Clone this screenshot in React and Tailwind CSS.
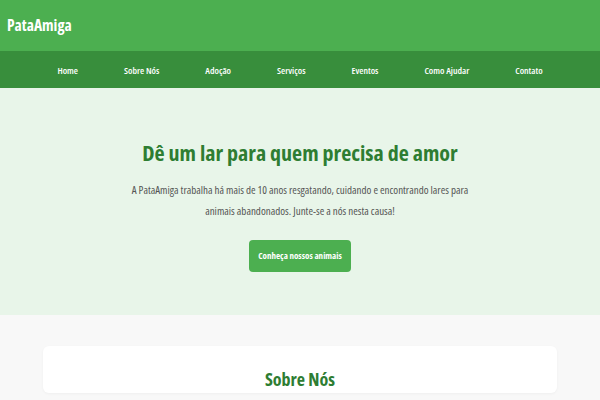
const navItems = ["Home", "Sobre Nós", "Adoção", "Serviços", "Eventos", "Como Ajudar", "Contato"];

export default function App() {
  return (
    <div className="min-h-screen bg-[#f8f8f8] font-['Open_Sans',sans-serif] [font-stretch:75%]">
      <header className="flex h-[51px] items-center bg-[#4caf50] px-[7px]">
        <h1 className="text-[15.5px] font-bold text-white">PataAmiga</h1>
      </header>

      <nav className="flex h-[37px] items-center justify-center gap-[46px] bg-[#388e3c]">
        {navItems.map((item) => (
          <a key={item} href="#" className="pt-[3px] text-[9.5px] font-semibold text-white">
            {item}
          </a>
        ))}
      </nav>

      <section className="flex h-[227px] flex-col items-center bg-[#e8f5e9] pt-[47px] text-center">
        <h2 className="text-[22px] leading-[34px] font-bold text-[#2e7d32]">
          Dê um lar para quem precisa de amor
        </h2>
        <p className="mt-[10px] max-w-[350px] text-[11px] leading-[21px] text-[#555]">
          A PataAmiga trabalha há mais de 10 anos resgatando, cuidando e encontrando lares para animais abandonados. Junte-se a nós nesta causa!
        </p>
        <button className="mt-[19px] h-[32px] rounded bg-[#4caf50] px-[9px] text-[9px] font-bold text-white">
          Conheça nossos animais
        </button>
      </section>

      <main className="px-[43px] pt-[31px]">
        <div className="rounded-md bg-white pt-[19px] text-center shadow-[0_1px_3px_rgba(0,0,0,0.04)]">
          <h2 className="text-[18px] leading-[28px] font-bold text-[#2e7d32]">Sobre Nós</h2>
        </div>
      </main>
    </div>
  );
}
